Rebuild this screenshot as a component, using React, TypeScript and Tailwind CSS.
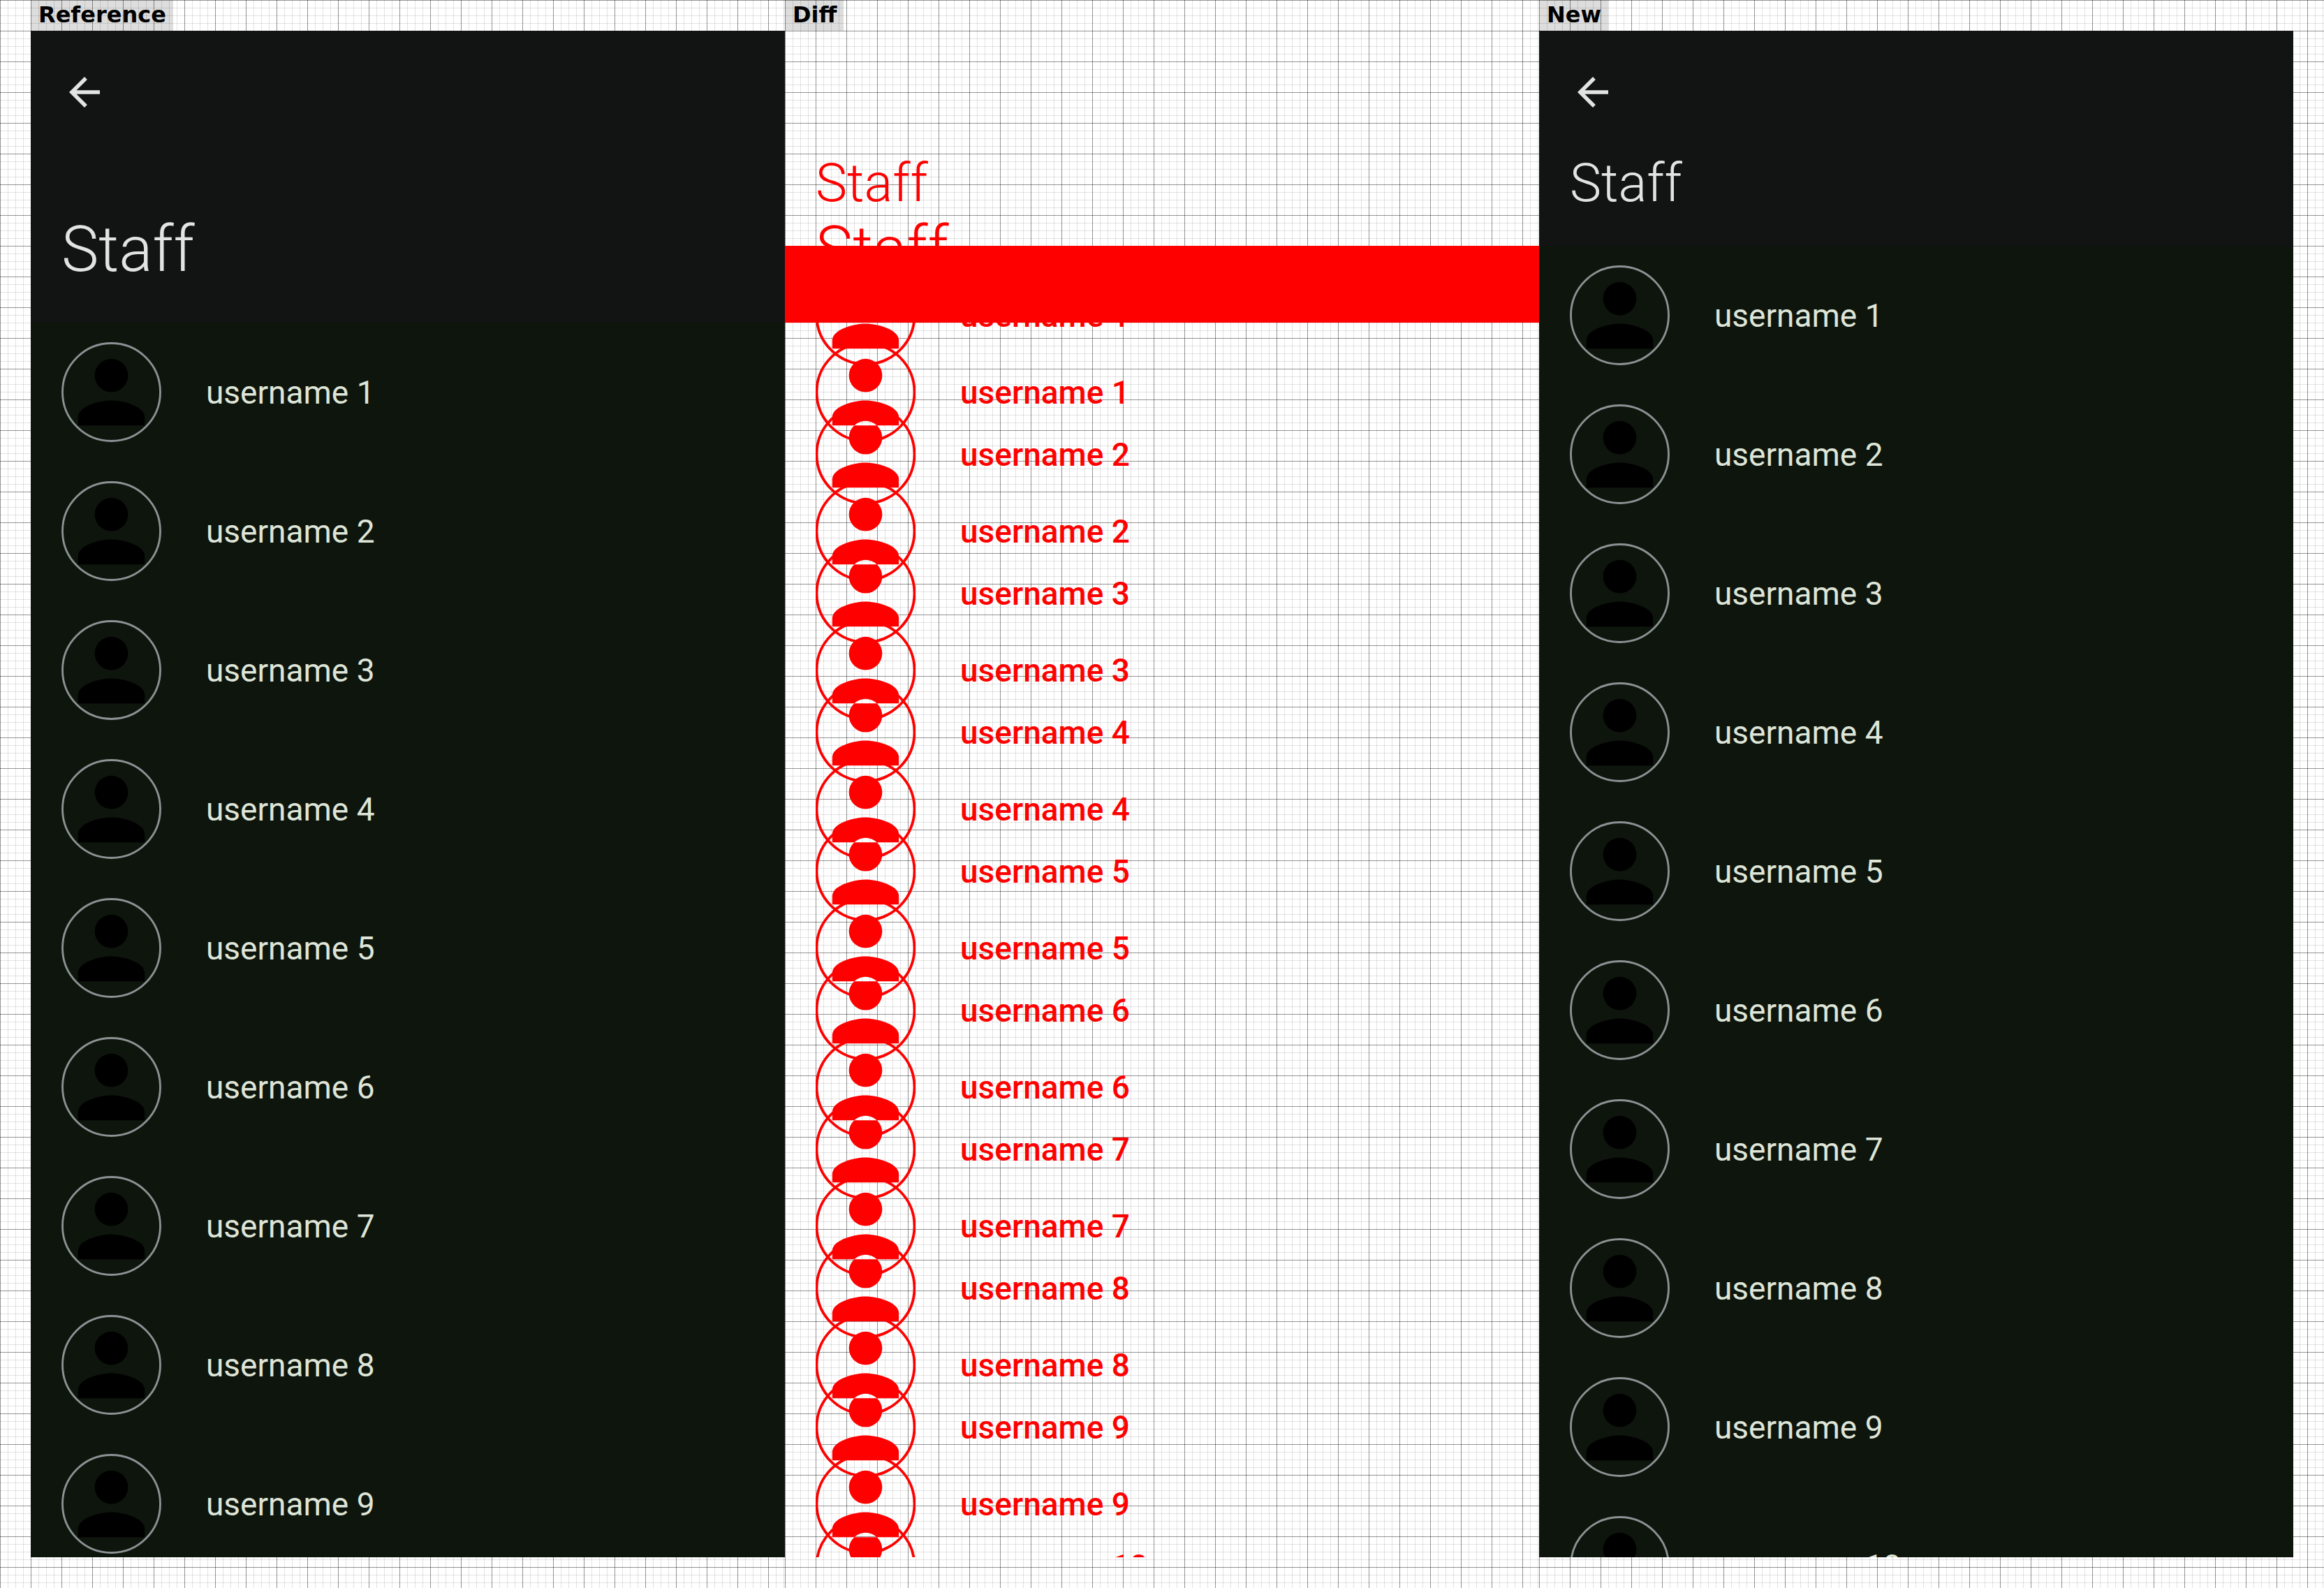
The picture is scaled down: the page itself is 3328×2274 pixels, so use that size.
type Tone = "screen" | "diff";

const users = Array.from({ length: 10 }, (_, i) => `username ${i + 1}`);

const gridPaper =
  "bg-[linear-gradient(to_right,#00000059_1px,transparent_1px),linear-gradient(to_bottom,#00000059_1px,transparent_1px),linear-gradient(to_right,#0000001c_1px,transparent_1px),linear-gradient(to_bottom,#0000001c_1px,transparent_1px)] bg-[size:44px_44px,44px_44px,11px_11px,11px_11px]";

const HEAD = "M12 4a4 4 0 1 1 0 8a4 4 0 1 1 0-8z";
const BODY = "M12 14c-2.67 0-8 1.34-8 4v2h16v-2c0-2.66-5.33-4-8-4z";
// Shapes with the shared area of two overlapping avatars left out.
const HEAD_CUT = "M9.29 5.06H14.71A4 4 0 1 1 9.29 5.06z";
const BODY_CUT = "M12 14c-2.67 0-8 1.34-8 4v2h5.29A4 4 0 0 1 14.71 20H20v-2c0-2.66-5.33-4-8-4z";

function Avatar({ tone, head = HEAD, body = BODY }: { tone: Tone; head?: string; body?: string }) {
  return (
    <svg
      viewBox="0 0 24 24"
      aria-hidden="true"
      className={`size-[143px] shrink-0 ${tone === "diff" ? "text-[#ff0000]" : "text-black"}`}
    >
      <path d={head} fill="currentColor" />
      <path d={body} fill="currentColor" />
      <circle
        cx="12"
        cy="12"
        r="11.75"
        fill="none"
        stroke={tone === "diff" ? "#ff0000" : "#8c9293"}
        strokeWidth={tone === "diff" ? 0.64 : 0.48}
      />
    </svg>
  );
}

interface UserListProps {
  tone: Tone;
  names: string[];
  head?: string;
  body?: string;
}

function UserList({ tone, names, head, body }: UserListProps) {
  return (
    <ul className={tone === "diff" ? "text-[#ff0000] font-medium" : "text-[#dee5d8]"}>
      {names.map((name) => (
        <li key={name} className="flex items-center gap-16 px-11 py-7">
          <Avatar tone={tone} head={head} body={body} />
          <span className="text-[46px] leading-[64px] whitespace-nowrap">{name}</span>
        </li>
      ))}
    </ul>
  );
}

function Title({ large }: { large: boolean }) {
  return (
    <h2
      className={
        large
          ? "px-11 pb-12 text-[90px] leading-[112px] font-light"
          : "px-11 pb-12 text-[76px] leading-[84px] font-light"
      }
    >
      Staff
    </h2>
  );
}

function StaffScreen({ large, names }: { large: boolean; names: string[] }) {
  return (
    <div className="min-h-0 flex-1 overflow-hidden bg-[#0e150d]">
      <header className="bg-[#121413] pt-[55px] text-[#e3e3e3]">
        <button
          type="button"
          aria-label="Back"
          className={large ? "mb-[137px] ml-11 block size-[66px]" : "mb-[55px] ml-11 block size-[66px]"}
        >
          <svg viewBox="0 0 24 24" className="size-full" fill="currentColor" aria-hidden="true">
            <path d="M20 11H7.83l5.59-5.59L12 4l-8 8 8 8 1.41-1.41L7.83 13H20v-2z" />
          </svg>
        </button>
        <Title large={large} />
      </header>
      <UserList tone="screen" names={names} />
    </div>
  );
}

function DiffScreen() {
  return (
    <div className="grid min-h-0 flex-1 content-start overflow-hidden text-[#ff0000]">
      <div className="col-start-1 row-start-1 pt-[176px]">
        <Title large={false} />
        <UserList tone="diff" names={users} head={HEAD_CUT} />
      </div>
      <div className="col-start-1 row-start-1 pt-[258px]">
        <Title large />
        <UserList tone="diff" names={users.slice(0, 9)} body={BODY_CUT} />
      </div>
      <div className="col-start-1 row-start-1 mt-[308px] h-[110px] bg-[#ff0000]" />
    </div>
  );
}

function Label({ children }: { children: string }) {
  return (
    <h1 className="h-11 self-start bg-[#00000022] pr-[10px] pl-[11px] font-['DejaVu_Sans',sans-serif] text-[32px] leading-[42px] font-bold text-black">
      {children}
    </h1>
  );
}

export default function App() {
  return (
    <main className="grid h-screen grid-cols-[44px_1fr_1fr_1fr_44px] overflow-hidden bg-white font-[Roboto,sans-serif]">
      <section className={`col-span-2 flex min-h-0 flex-col pb-11 pl-11 ${gridPaper}`}>
        <Label>Reference</Label>
        <StaffScreen large names={users.slice(0, 9)} />
      </section>
      <section className={`flex min-h-0 flex-col pb-11 ${gridPaper}`}>
        <Label>Diff</Label>
        <DiffScreen />
      </section>
      <section className={`col-span-2 flex min-h-0 flex-col pr-11 pb-11 ${gridPaper}`}>
        <Label>New</Label>
        <StaffScreen large={false} names={users} />
      </section>
    </main>
  );
}
